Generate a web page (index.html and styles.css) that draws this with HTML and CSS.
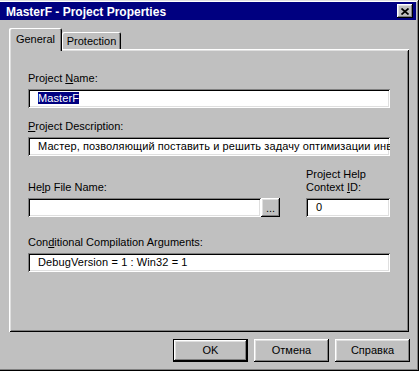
FILE: index.html
```html
<!DOCTYPE html>
<html lang="ru">
<head>
    <meta charset="UTF-8">
    <meta name="viewport" content="width=device-width, initial-scale=1.0">
    <title>MasterF - Project Properties</title>
    <link rel="stylesheet" href="styles.css">
</head>
<body>
    <div class="window">
        <!-- Caption -->
        <div class="titlebar">
            <span class="title">MasterF - Project Properties</span>
            <span class="close-btn">
                <svg width="8" height="7" viewBox="0 0 8 7">
                    <path d="M0.5 0.5 L7.5 6.5 M7.5 0.5 L0.5 6.5" stroke="#000" stroke-width="1.7" fill="none"/>
                </svg>
            </span>
        </div>

        <div class="dialog">
            <div class="tabs">
                <div class="tab tab-active">General</div>
                <div class="tab">Protection</div>
            </div>

            <div class="panel">
                <div class="group group-name">
                    <div class="label">Project <u>N</u>ame:</div>
                    <div class="field"><span class="selected">MasterF</span></div>
                </div>

                <div class="group group-desc">
                    <div class="label"><u>P</u>roject Description:</div>
                    <div class="field">Мастер, позволяющий поставить и решить задачу оптимизации инвестиций</div>
                </div>

                <div class="help-row">
                    <div class="help-col">
                        <div class="label">He<u>l</u>p File Name:</div>
                        <div class="browse-line">
                            <div class="field field-help"></div>
                            <div class="browse-btn">...</div>
                        </div>
                    </div>
                    <div class="context-col">
                        <div class="label">Project Help<br>Context <u>I</u>D:</div>
                        <div class="field">0</div>
                    </div>
                </div>

                <div class="group group-args">
                    <div class="label">Con<u>d</u>itional Compilation Arguments:</div>
                    <div class="field">DebugVersion = 1 : Win32 = 1</div>
                </div>
            </div>

            <div class="buttons">
                <div class="btn btn-default">OK</div>
                <div class="btn">Отмена</div>
                <div class="btn">Справка</div>
            </div>
        </div>
    </div>
</body>
</html>
```

FILE: styles.css
```css
body {
    margin: 0;
    background: #c0c0c0;
    font-family: "Liberation Sans", Arial, sans-serif;
    font-size: 11px;
    color: #000;
}

/* Outer window frame, left edge is cut off in the shot */
.window {
    width: 419px;
    height: 371px;
    box-sizing: border-box;
    padding: 2px 3px 3px 0;
    background: #c0c0c0;
    box-shadow: inset -1px -1px 0 #000, inset 0 1px 0 #dfdfdf,
                inset -2px -2px 0 #808080, inset 0 2px 0 #fff;
    display: flex;
    flex-direction: column;
}

.titlebar {
    height: 18px;
    background: #000080;
    color: #fff;
    font-size: 12px;
    font-weight: bold;
    display: flex;
    align-items: center;
    justify-content: space-between;
    padding: 0 3px 0 6px;
}

.title {
    padding-top: 1px;
}

.close-btn {
    width: 16px;
    height: 14px;
    box-sizing: border-box;
    background: #c0c0c0;
    display: flex;
    align-items: center;
    justify-content: center;
    box-shadow: inset -1px -1px 0 #000, inset 1px 1px 0 #fff,
                inset -2px -2px 0 #808080, inset 2px 2px 0 #dfdfdf;
}

.dialog {
    flex: 1;
    padding: 8px 0 0 9px;
    display: flex;
    flex-direction: column;
}

/* Tab strip */
.tabs {
    display: flex;
    align-items: flex-end;
    height: 21px;
    position: relative;
    z-index: 1;
}

.tab {
    box-sizing: border-box;
    height: 17px;
    width: 59px;
    padding-top: 3px;
    text-align: center;
    background: #c0c0c0;
    border-radius: 2px 2px 0 0;
    box-shadow: inset 1px 1px 0 #fff, inset -1px 0 0 #000, inset -2px 0 0 #808080;
}

.tab-active {
    width: 53px;
    height: 23px;
    padding-top: 5px;
    margin-bottom: -2px;
    box-shadow: inset 1px 1px 0 #fff, inset 2px 0 0 #dfdfdf, inset -1px 0 0 #000, inset -2px 0 0 #808080;
}

/* Tab page */
.panel {
    width: 400px;
    height: 283px;
    box-sizing: border-box;
    padding: 0 19px;
    box-shadow: inset 1px 1px 0 #fff, inset -1px -1px 0 #000,
                inset 2px 2px 0 #dfdfdf, inset -2px -2px 0 #808080;
}

.label {
    line-height: 13px;
    margin-bottom: 4px;
}

.field {
    height: 19px;
    box-sizing: border-box;
    padding-left: 10px;
    line-height: 19px;
    background: #fff;
    white-space: nowrap;
    overflow: hidden;
    letter-spacing: 0.1px;
    box-shadow: inset 1px 1px 0 #808080, inset -1px -1px 0 #fff,
                inset 2px 2px 0 #000, inset -2px -2px 0 #dfdfdf;
}

.selected {
    background: #000080;
    color: #fff;
}

.group-name {
    margin-top: 23px;
}

.group-desc {
    margin-top: 12px;
}

.help-row {
    margin-top: 12px;
    display: flex;
    align-items: flex-end;
    gap: 26px;
}

.help-col {
    width: 252px;
}

.browse-line {
    display: flex;
}

.field-help {
    flex: 1;
}

.browse-btn {
    width: 19px;
    height: 19px;
    box-sizing: border-box;
    text-align: center;
    line-height: 20px;
    box-shadow: inset -1px -1px 0 #000, inset 1px 1px 0 #fff,
                inset -2px -2px 0 #808080, inset 2px 2px 0 #dfdfdf;
}

.context-col {
    width: 84px;
}

.group-args {
    margin-top: 19px;
}

/* Bottom buttons */
.buttons {
    margin-top: 7px;
    margin-right: 6px;
    display: flex;
    justify-content: flex-end;
    gap: 6px;
}

.btn {
    width: 75px;
    height: 23px;
    box-sizing: border-box;
    text-align: center;
    line-height: 23px;
    box-shadow: inset -1px -1px 0 #000, inset 1px 1px 0 #fff,
                inset -2px -2px 0 #808080, inset 2px 2px 0 #dfdfdf;
}

.btn-default {
    box-shadow: inset 0 0 0 1px #000, inset -2px -2px 0 #000, inset 2px 2px 0 #fff,
                inset -3px -3px 0 #808080, inset 3px 3px 0 #dfdfdf;
}
```
